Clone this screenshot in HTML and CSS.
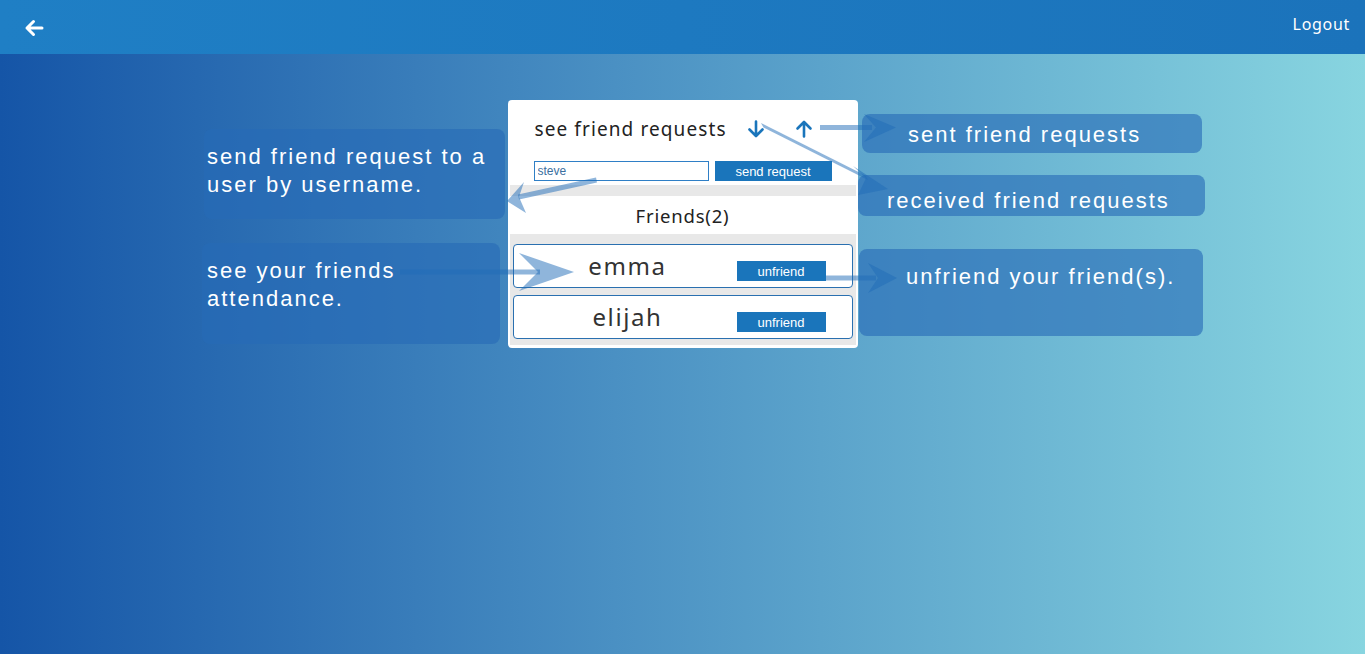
FILE: index.html
```html
<!DOCTYPE html>
<html lang="en">
<head>
<meta charset="utf-8">
<title>Friends</title>
<link rel="stylesheet" href="styles.css">
</head>
<body>
<header class="topbar">
  <a class="back" href="#" aria-label="Back">
    <svg width="20" height="18" viewBox="0 0 20 18"><path d="M18 9H3M9.5 2.5L3 9l6.5 6.5" fill="none" stroke="#fff" stroke-width="3" stroke-linecap="round" stroke-linejoin="round"/></svg>
  </a>
  <a class="logout" href="#">Logout</a>
</header>

<main class="page">
  <section class="card">
    <div class="card-top">
      <div class="title-row">
        <span class="title">see friend requests</span>
        <span class="icon-btn down"><svg width="18" height="18" viewBox="0 0 18 18"><path d="M9 1.5v14M2.5 9.5L9 16l6.5-6.5" fill="none" stroke="#1a75bb" stroke-width="2.6" stroke-linecap="round" stroke-linejoin="round"/></svg></span>
        <span class="icon-btn up"><svg width="18" height="18" viewBox="0 0 18 18"><path d="M9 16.5v-14M2.5 8.5L9 2l6.5 6.5" fill="none" stroke="#1a75bb" stroke-width="2.6" stroke-linecap="round" stroke-linejoin="round"/></svg></span>
      </div>
      <form class="send-form">
        <input class="user-input" type="text" value="steve">
        <button class="btn send" type="button">send request</button>
      </form>
    </div>
    <div class="band"></div>
    <div class="friends-head">Friends(2)</div>
    <div class="friend-list">
      <div class="friend">
        <span class="name">emma</span>
        <button class="btn unfriend" type="button">unfriend</button>
      </div>
      <div class="friend">
        <span class="name">elijah</span>
        <button class="btn unfriend" type="button">unfriend</button>
      </div>
    </div>
  </section>

  <div class="note note-send">send friend request to a<br>user by username.</div>
  <div class="note note-attend">see your friends<br>attendance.</div>
  <div class="note note-sent">sent friend requests</div>
  <div class="note note-received">received friend requests</div>
  <div class="note note-unfriend">unfriend your friend(s).</div>

  <svg class="arrows" width="1365" height="654" viewBox="0 0 1365 654">
    <g fill="rgba(31,107,184,0.5)" stroke="none">
      <!-- send request arrow -->
      <path d="M596 177.5 L597 182.5 L519 199.5 L518 194.5 Z"/>
      <path d="M507 201 L524 182 L519 197 L526 213 Z"/>
      <!-- attendance arrow -->
      <rect x="400" y="269.5" width="140" height="5"/>
      <path d="M574 272 L519 253 L538 272 L519 291 Z"/>
      <!-- sent arrow -->
      <rect x="820" y="125" width="52" height="5"/>
      <path d="M896 127.5 L864 114 L876 127.5 L864 142 Z"/>
      <!-- received arrow -->
      <path d="M761 123 L763.5 127.5 L868 180 L865.5 175.5 Z"/>
      <path d="M888 189 L853 166 L866 178 L858 195 Z"/>
      <!-- unfriend arrow -->
      <rect x="826" y="275.5" width="50" height="5"/>
      <path d="M897 278 L868 263 L878 278 L868 293 Z"/>
    </g>
  </svg>
</main>
</body>
</html>
```

FILE: styles.css
```css
* { box-sizing: border-box; }

html, body {
  margin: 0;
  height: 100%;
}

body {
  font-family: "Noto Sans", "Liberation Sans", sans-serif;
  background: linear-gradient(to right, #1555a7 0%, #4a90c3 45%, #88d5e0 100%);
  overflow: hidden;
}

.topbar {
  height: 54px;
  background: linear-gradient(to right, #1f7fc5, #1b73bb);
  display: flex;
  align-items: center;
  justify-content: space-between;
  padding: 0 15px 0 24px;
}

.back {
  display: flex;
  align-items: center;
  margin-top: 1px;
}

.logout {
  color: #fff;
  text-decoration: none;
  font-size: 16px;
  margin-top: -6px;
  letter-spacing: 0.7px;
}

.page {
  position: relative;
  height: calc(100% - 54px);
  display: flex;
  justify-content: center;
  align-items: flex-start;
  padding-top: 46px;
}

.card {
  width: 350px;
  background: #fff;
  border-radius: 4px;
  padding: 0 2px 3px;
}

.card-top {
  height: 85px;
  padding: 14px 0 0 25px;
}

.title-row {
  display: flex;
  align-items: center;
  height: 30px;
}

.title {
  font-size: 19px;
  color: #222;
  letter-spacing: 1.1px;
  width: 212px;
  margin-top: -1px;
}

.icon-btn {
  display: flex;
  width: 18px;
  height: 18px;
}

.icon-btn.up { margin-left: 30px; }

.send-form {
  display: flex;
  gap: 6px;
  margin: 17px 0 0 -1px;
}

.user-input {
  width: 175px;
  height: 20px;
  border: 1px solid #2f7fc6;
  padding: 0 3px;
  font: 12px "Liberation Sans", Arial, sans-serif;
  color: #3b6f9f;
  outline: none;
}

.btn {
  background: #1a75bb;
  color: #fff;
  border: none;
  font: 13px "Liberation Sans", Arial, sans-serif;
  padding: 0;
  cursor: pointer;
}

.btn.send {
  width: 117px;
  height: 20px;
}

.band {
  height: 11px;
  background: #e8e8e8;
}

.friends-head {
  height: 38px;
  display: flex;
  align-items: center;
  justify-content: center;
  font-size: 18.5px;
  color: #222;
  letter-spacing: 0.8px;
}

.friend-list {
  background: #e8e8e8;
  padding: 10px 3px 6px;
  display: flex;
  flex-direction: column;
  gap: 7px;
}

.friend {
  height: 44px;
  background: #fff;
  border: 1px solid #2a70b0;
  border-radius: 4px;
  display: flex;
  align-items: center;
}

.name {
  flex: 0 0 220px;
  margin-left: 4px;
  text-align: center;
  font-size: 24px;
  color: #333;
  letter-spacing: 1.6px;
  margin-top: -2px;
}

.btn.unfriend {
  width: 89px;
  height: 20px;
  margin-top: 10px;
  margin-left: -1px;
}

.note {
  position: absolute;
  background: rgba(38, 107, 182, 0.62);
  border-radius: 8px;
  color: #fff;
  font: 22px/28px "Liberation Sans", Arial, sans-serif;
  letter-spacing: 2px;
  -webkit-font-smoothing: none;
}

.note-send { left: 204px; top: 75px; width: 301px; height: 90px; padding: 14px 0 0 3px; }
.note-attend { left: 202px; top: 189px; width: 298px; height: 101px; padding: 14px 0 0 5px; }
.note-sent { left: 862px; top: 60px; width: 340px; height: 39px; padding: 7px 0 0 46px; }
.note-received { left: 858px; top: 121px; width: 347px; height: 41px; padding: 12px 0 0 29px; }
.note-unfriend { left: 859px; top: 195px; width: 344px; height: 87px; padding: 14px 0 0 47px; }

.arrows {
  position: absolute;
  left: 0;
  top: -54px;
  pointer-events: none;
}
```
